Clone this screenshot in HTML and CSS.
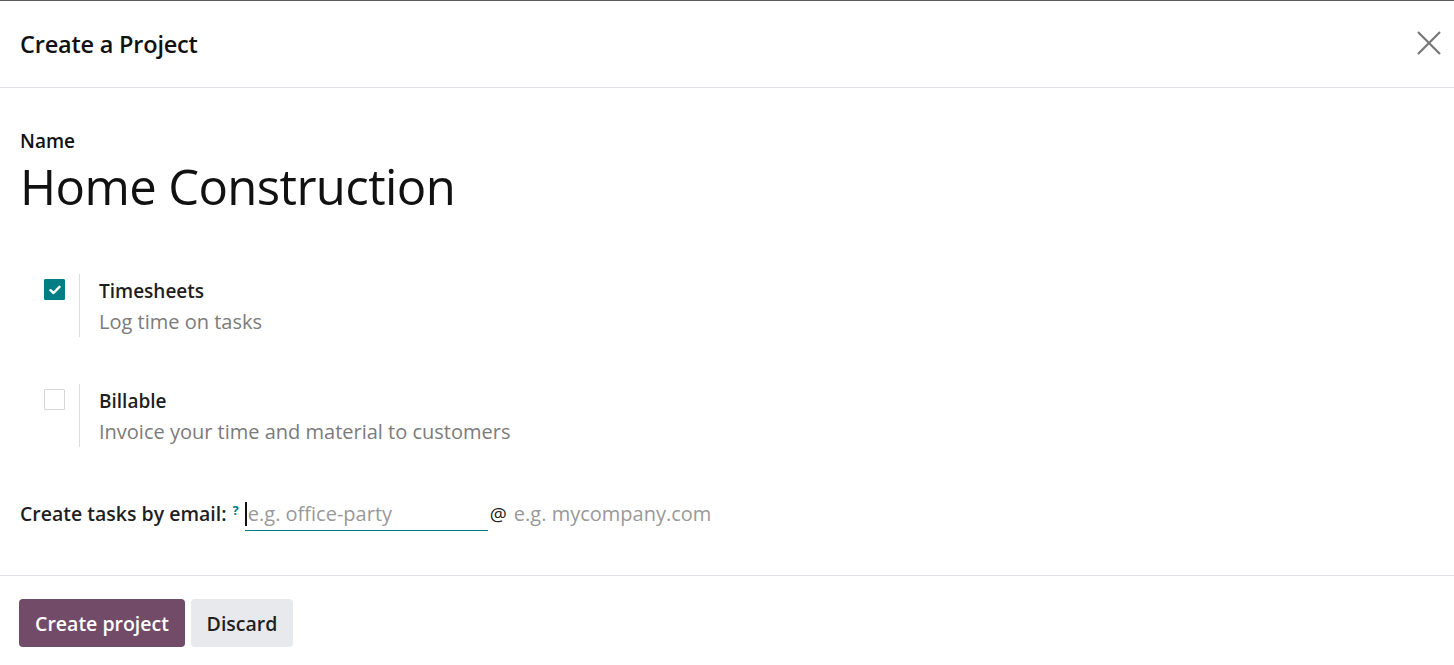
FILE: index.html
```html
<!DOCTYPE html>
<html>
<head>
<meta charset="utf-8">
<link rel="stylesheet" href="styles.css">
</head>
<body>
<div class="modal">
  <header class="modal-header">
    <h4 class="modal-title">Create a Project</h4>
    <button class="close" aria-label="Close">
      <svg width="24" height="24" viewBox="0 0 24 24"><path d="M1 1 L23 23 M23 1 L1 23" stroke="#777" stroke-width="2.2" fill="none"/></svg>
    </button>
  </header>
  <main class="modal-body">
    <div class="name-label">Name</div>
    <div class="name-value">Home Construction</div>

    <div class="options">
      <div class="option">
        <div class="check-col"><span class="checkbox checked"><svg width="12" height="10" viewBox="0 0 12 10"><path d="M1.5 5.2 L4.5 8 L10.5 1.8" stroke="#fff" stroke-width="2.4" fill="none" stroke-linecap="round" stroke-linejoin="round"/></svg></span></div>
        <div class="option-text">
          <div class="option-title">Timesheets</div>
          <div class="option-desc">Log time on tasks</div>
        </div>
      </div>
      <div class="option">
        <div class="check-col"><span class="checkbox"></span></div>
        <div class="option-text">
          <div class="option-title">Billable</div>
          <div class="option-desc">Invoice your time and material to customers</div>
        </div>
      </div>
    </div>

    <div class="email-row">
      <span class="email-label">Create tasks by email:</span><sup class="help">?</sup>
      <span class="email-input"><span class="caret"></span><span class="ph">e.g. office-party</span></span>
      <span class="at">@</span>
      <span class="ph domain">e.g. mycompany.com</span>
    </div>
  </main>
  <footer class="modal-footer">
    <button class="btn btn-primary">Create project</button>
    <button class="btn btn-secondary">Discard</button>
  </footer>
</div>
</body>
</html>
```
FILE: styles.css
```css
* { box-sizing: border-box; }
html, body { margin: 0; padding: 0; background: #fff; }
body {
  font-family: "Open Sans", "Noto Sans", sans-serif;
  color: #111;
  border-top: 1px solid #5a5a5a;
}
.modal { width: 1454px; height: 664px; display: flex; flex-direction: column; }
.modal-header {
  height: 87px;
  border-bottom: 1px solid #dee2e6;
  display: flex;
  align-items: center;
  justify-content: space-between;
  padding: 0 10px 0 20px;
}
.modal-title { margin: 0; font-size: 23.5px; font-weight: 600; color: #111; letter-spacing: -0.2px; }
.close { background: none; border: 0; padding: 0; width: 30px; height: 30px; display: flex; align-items: center; justify-content: center; margin-top: -2px; }
.modal-body { padding: 0 20px; flex: 1; }
.name-label { margin-top: 41px; font-size: 19px; font-weight: 600; line-height: 24px; }
.name-value { font-size: 49px; line-height: 60px; margin-top: 3px; letter-spacing: -0.6px; font-weight: 400; color: #111; }
.options { margin-top: 58px; display: flex; flex-direction: column; gap: 47px; }
.option { display: flex; }
.check-col { width: 60px; border-right: 1px solid #dcdcdc; padding-left: 24px; padding-top: 5px; height: 63px; }
.checkbox { display: flex; width: 21px; height: 21px; border: 1px solid #d6d6d6; border-radius: 1px; align-items: center; justify-content: center; background: #fff; }
.checkbox.checked { background: #017e84; border-color: #017e84; }
.option-text { padding-left: 19px; padding-top: 2px; }
.option-title { font-size: 19px; font-weight: 600; line-height: 31px; color: #1f1f1f; }
.option-desc { font-size: 20px; line-height: 30px; color: #7b7b7b; }
.email-row { margin-top: 53px; display: flex; align-items: baseline; font-size: 19.5px; line-height: 28px; }
.email-label { font-weight: 600; color: #1f1f1f; }
.help { color: #017e84; font-size: 13px; font-weight: 700; margin-left: 6px; position: relative; top: -6px; line-height: 1; }
.email-input { margin-left: 6px; width: 243px; border-bottom: 1px solid #017e84; display: inline-block; padding-bottom: 2px; line-height: 28px; white-space: nowrap; }
.caret { display: inline-block; width: 2px; height: 24px; background: #111; margin-right: 1px; vertical-align: -5px; }
.ph { color: #999; font-size: 20px; font-weight: 400; }
.at { margin-left: 2px; font-size: 19px; color: #222; }
.domain { margin-left: 7px; }
.modal-footer {
  border-top: 1px solid #dee2e6;
  height: 90px;
  padding: 23px 19px 0;
  display: flex;
  gap: 6px;
  align-items: flex-start;
}
.btn { height: 48px; border: 0; border-radius: 4px; font-family: inherit; font-size: 19.5px; font-weight: 600; padding: 0; }
.btn-primary { background: #714b67; color: #fff; width: 166px; }
.btn-secondary { background: #e7e9ed; color: #1f1f1f; width: 102px; }
```
